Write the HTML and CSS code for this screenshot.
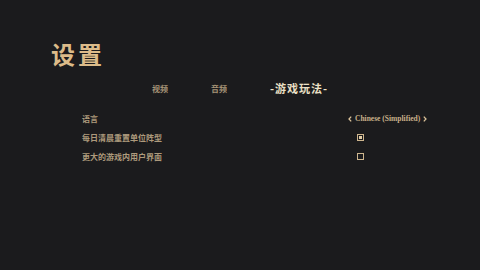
FILE: index.html
```html
<!DOCTYPE html>
<html lang="zh">
<head>
  <meta charset="UTF-8">
  <title>设置</title>
  <link rel="stylesheet" href="styles.css">
</head>
<body>

  <div class="page">
    <h1 class="title">设置</h1>

    <div class="tabs">
      <span class="tab">视频</span>
      <span class="tab">音频</span>
      <span class="tab active">-游戏玩法-</span>
    </div>

    <div class="options">
      <div class="row">
        <span class="label">语言</span>
        <div class="control">
          <span class="picker">
            <svg class="arrow" width="4" height="6" viewBox="0 0 4 6"><path d="M3.2 0.6 L1 3 L3.2 5.4" fill="none" stroke="currentColor" stroke-width="1.3"/></svg>
            <span class="value">Chinese (Simplified)</span>
            <svg class="arrow" width="4" height="6" viewBox="0 0 4 6"><path d="M0.8 0.6 L3 3 L0.8 5.4" fill="none" stroke="currentColor" stroke-width="1.3"/></svg>
          </span>
        </div>
      </div>
      <div class="row">
        <span class="label">每日清晨重置单位阵型</span>
        <div class="control">
          <span class="box checked"></span>
        </div>
      </div>
      <div class="row">
        <span class="label">更大的游戏内用户界面</span>
        <div class="control">
          <span class="box"></span>
        </div>
      </div>
    </div>
  </div>

</body>
</html>
```

FILE: styles.css
```css
html, body {
  margin: 0;
  height: 100%;
}

body {
  background-color: #1b1b1d;
  font-family: "Noto Sans CJK SC", "Liberation Serif", serif;
  color: #b9a78a;
  overflow: hidden;
}

.page {
  padding: 38px 0 0 51px;
}

.title {
  margin: 0;
  font-size: 24px;
  line-height: 32px;
  font-weight: 700;
  letter-spacing: 3px;
  color: #dcbb89;
}

.tabs {
  display: flex;
  align-items: center;
  gap: 43px;
  margin: 10px 0 0 101px;
  height: 16px;
}

.tab {
  font-size: 8px;
  font-weight: 700;
  color: #a89578;
}

.active {
  font-size: 11px;
  letter-spacing: 1px;
  color: #ece0c6;
}

.options {
  width: 344px;
  margin: 13px 0 0 31px;
}

.row {
  display: flex;
  align-items: center;
  justify-content: space-between;
  height: 19px;
}

.label {
  font-size: 8px;
  font-weight: 700;
  color: #ad9a7c;
}

.control {
  width: 78px;
  display: flex;
  align-items: center;
}

.picker {
  display: flex;
  align-items: center;
  gap: 3px;
  white-space: nowrap;
  font-family: "Liberation Serif", serif;
  font-weight: 700;
  font-size: 7.5px;
  color: #c8b08a;
}

.arrow {
  color: #dcc39a;
}

.box {
  width: 5px;
  height: 5px;
  margin-left: 9px;
  border: 1px solid #cdb58e;
  position: relative;
}

.checked::after {
  content: "";
  position: absolute;
  left: 1px;
  top: 1px;
  width: 3px;
  height: 3px;
  background-color: #e2cda6;
}
```
